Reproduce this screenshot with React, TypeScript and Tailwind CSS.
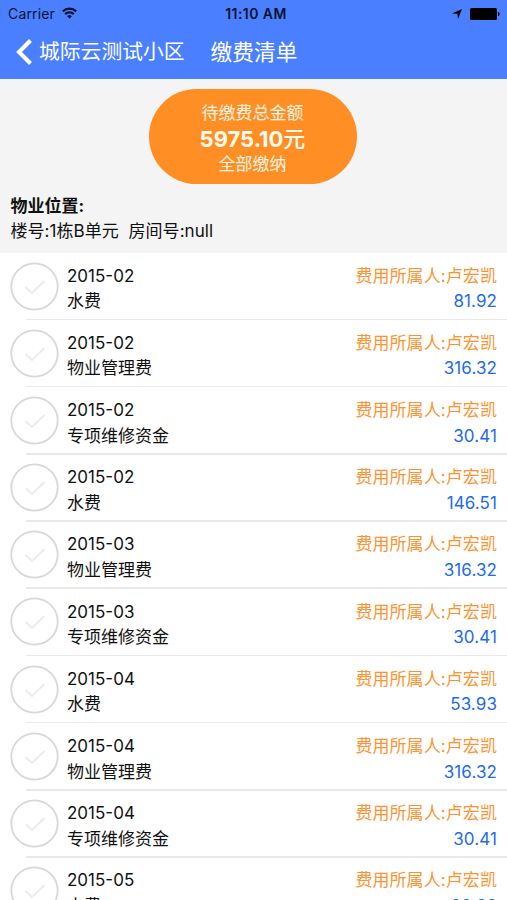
const fees = [
  { month: '2015-02', name: '水费', amount: '81.92' },
  { month: '2015-02', name: '物业管理费', amount: '316.32' },
  { month: '2015-02', name: '专项维修资金', amount: '30.41' },
  { month: '2015-02', name: '水费', amount: '146.51' },
  { month: '2015-03', name: '物业管理费', amount: '316.32' },
  { month: '2015-03', name: '专项维修资金', amount: '30.41' },
  { month: '2015-04', name: '水费', amount: '53.93' },
  { month: '2015-04', name: '物业管理费', amount: '316.32' },
  { month: '2015-04', name: '专项维修资金', amount: '30.41' },
  { month: '2015-05', name: '水费', amount: '80.32' },
];

function StatusBar() {
  return (
    <div className="grid h-[27px] grid-cols-3 items-center pl-2 pr-[7px] text-[14px] leading-[27px] text-[#0a1330]">
      <div className="flex items-center gap-[7px]">
        <span className="tracking-[0.15px]">Carrier</span>
        <svg className="-mt-0.5" width="15" height="12" viewBox="0 0 15 12" fill="none" stroke="currentColor" strokeWidth="2.2">
          <path d="M0.8 4.400a9.500 9.500 0 0 1 13.400 0" />
          <path d="M3.200 7.100a6.100 6.100 0 0 1 8.600 0" />
          <path d="M7.500 11.800 5.100 9.300a3.300 3.300 0 0 1 4.800 0Z" fill="currentColor" stroke="none" />
        </svg>
      </div>
      <div className="whitespace-nowrap pl-1 text-center text-[14px] font-semibold tracking-[0.45px]">11:10 AM</div>
      <div className="flex items-center justify-end gap-2 text-black">
        <svg width="10" height="10" viewBox="0 0 10 10" fill="currentColor">
          <path d="M10 0 6 10 5.400 4.800 0 4.600Z" />
        </svg>
        <svg width="30" height="12" viewBox="0 0 30 12" fill="currentColor">
          <rect x="0" y="0" width="27" height="12" rx="1.5" />
          <path d="M28 4c2.200 .5 2.200 3.500 0 4Z" />
        </svg>
      </div>
    </div>
  );
}

function FeeRow({ month, name, amount }: { month: string; name: string; amount: string }) {
  return (
    <li className="flex h-[67.2px] shrink-0 flex-col">
      <div className="flex flex-1 items-start px-2.5">
        <svg className="mt-[8.5px] shrink-0" width="49" height="49" viewBox="0 0 49 49" fill="none">
          <circle cx="24.500" cy="24.500" r="23.200" stroke="#d8d8d8" strokeWidth="1.800" />
          <path d="M15.500 25 22 31 34.500 19" stroke="#ebebeb" strokeWidth="1.800" />
        </svg>
        <div className="ml-2 mt-[10.7px] flex-1 leading-[25.5px]">
          <p>{month}</p>
          <p>{name}</p>
        </div>
        <div className="mt-[10.7px] text-right leading-[25.5px]">
          <p className="tracking-[0.08px] text-[#ff9331]">费用所属人:卢宏凯</p>
          <p className="text-[#1e6af0] tracking-[0.1px]">{amount}</p>
        </div>
      </div>
      <div className="ml-[26px] h-[1.5px] bg-[#e9e9eb]" />
    </li>
  );
}

export default function App() {
  return (
    <div className="flex h-[900px] w-[507px] flex-col overflow-hidden bg-white font-[Inter,'Noto_Sans_CJK_SC',sans-serif] text-[17px] text-[#111111]">
      <header className="h-[79px] shrink-0 bg-[#4a80ff]">
        <StatusBar />
        <nav className="flex h-[50px] items-center pl-4 leading-[50px] text-white">
          <svg width="16" height="26" viewBox="0 0 16 26" fill="none" stroke="currentColor" strokeWidth="4">
            <path d="M14.500 1.500 3 13 14.500 24.500" />
          </svg>
          <span className="ml-[7px] text-[20.8px]">城际云测试小区</span>
          <span className="ml-[26px] text-[21.7px]">缴费清单</span>
        </nav>
      </header>
      <section className="flex h-[174px] shrink-0 flex-col bg-[#f4f4f4] pt-[10px]">
        <button className="-ml-0.5 flex h-[95px] w-[208px] flex-col items-center self-center rounded-full bg-[#ff8f24] pt-[11.5px] text-[#fff3e0]">
          <span className="leading-[25px]">待缴费总金额</span>
          <span className="text-[22px] font-bold leading-[26px] text-[#fffaf0]">5975.10<span className="font-medium">元</span></span>
          <span className="leading-[24px]">全部缴纳</span>
        </button>
        <div className="mt-[9.5px] pl-[10.5px] leading-[25px]">
          <h2 className="font-bold">物业位置:</h2>
          <p className="whitespace-pre tracking-[0.05px]">楼号:1栋B单元  房间号:null</p>
        </div>
      </section>
      <ul className="flex min-h-0 flex-1 flex-col overflow-hidden">
        {fees.map((fee, i) => (
          <FeeRow key={i} {...fee} />
        ))}
      </ul>
    </div>
  );
}
